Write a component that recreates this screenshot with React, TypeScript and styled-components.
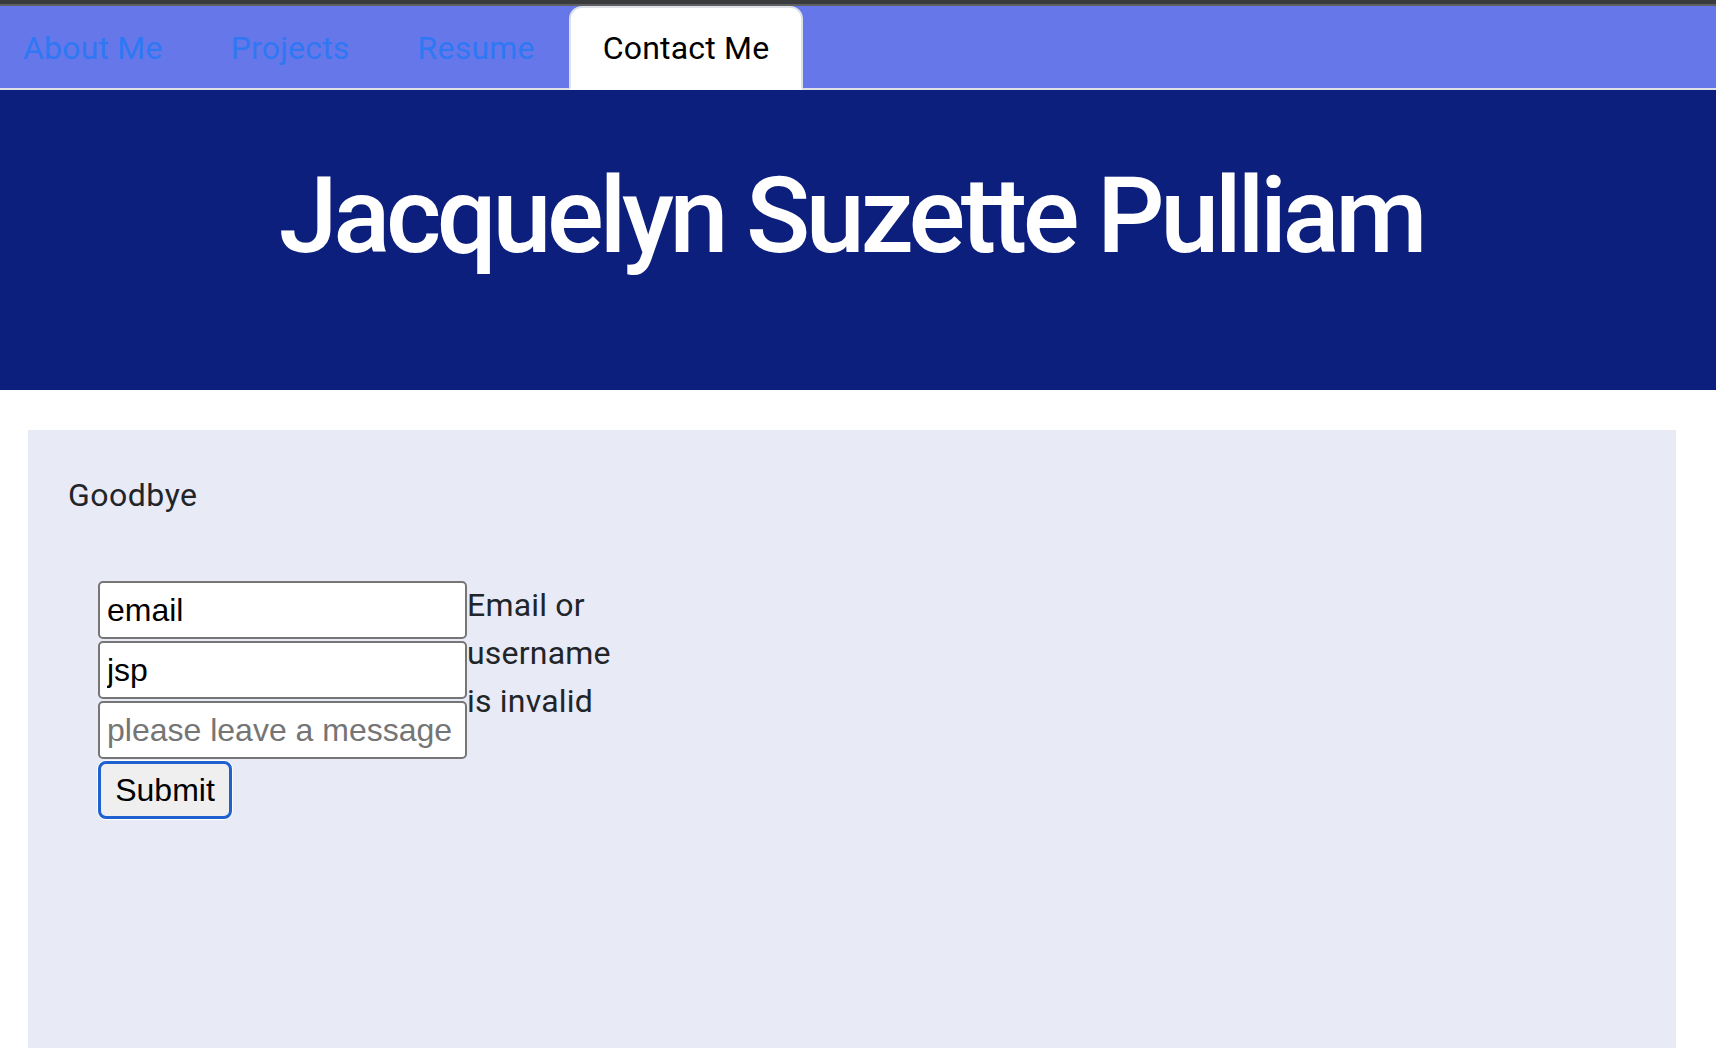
import React from "react";
import styled, { createGlobalStyle } from "styled-components";

const GlobalStyle = createGlobalStyle`
  html, body {
    margin: 0;
    padding: 0;
    overflow: hidden;
    background: #ffffff;
  }
  body {
    font-family: Roboto, "Liberation Sans", Arial, sans-serif;
    color: #212529;
  }
  * { box-sizing: border-box; }
`;

const Page = styled.div`
  width: 1716px;
  height: 1048px;
  overflow: hidden;
  background: #ffffff;
`;

const TopStrip = styled.div`
  height: 6px;
  background: #3a3b3d;
  border-bottom: 2px solid #5f5f61;
`;

const Nav = styled.nav`
  height: 84px;
  background: #6677e9;
  border-bottom: 2px solid #dee2e6;
  display: flex;
  align-items: flex-start;
`;

const TabList = styled.ul`
  list-style: none;
  margin: 0 0 0 -11px;
  padding: 0;
  display: flex;
`;

const Tab = styled.li<{ $active?: boolean }>`
  height: 84px;
  margin-bottom: -2px;
  padding: 16px 32px;
  border: 2px solid ${(p) => (p.$active ? "#dee2e6" : "transparent")};
  border-bottom-color: ${(p) => (p.$active ? "#ffffff" : "transparent")};
  border-radius: 13px 13px 0 0;
  background: ${(p) => (p.$active ? "#ffffff" : "transparent")};
  color: ${(p) => (p.$active ? "#000000" : "#2e78f4")};
  font-size: 32px;
  line-height: 48px;
  letter-spacing: 0.2px;
  white-space: nowrap;
`;

const Header = styled.header`
  height: 300px;
  background: #0c1f7c;
  padding: 63px 14px 0 0;
  text-align: center;
`;

const Title = styled.h1`
  margin: 0;
  color: #ffffff;
  font-size: 106px;
  line-height: 1.2;
  font-weight: 500;
  letter-spacing: -4.4px;
`;

const Main = styled.main`
  padding: 40px 0 0 28px;
`;

const Card = styled.section`
  width: 1648px;
  min-height: 700px;
  background: #e8eaf6;
  padding: 41px 40px;
`;

const Greeting = styled.p`
  margin: 0 0 62px 0;
  font-size: 32px;
  line-height: 48px;
  letter-spacing: 0.5px;
  color: #212529;
`;

const FormRow = styled.form`
  margin-left: 30px;
  display: flex;
  align-items: flex-start;
`;

const Fields = styled.div`
  display: flex;
  flex-direction: column;
  gap: 2px;
  align-items: flex-start;
`;

const TextInput = styled.input`
  width: 369px;
  height: 58px;
  border: 2px solid #767676;
  border-radius: 5px;
  padding: 0 7px;
  background: #ffffff;
  font-family: "Liberation Sans", Arial, sans-serif;
  font-size: 32px;
  color: #000000;
  outline: none;
  &::placeholder {
    color: #757575;
  }
`;

const SubmitButton = styled.button`
  width: 134px;
  height: 58px;
  border: 3px solid #1f62cf;
  border-radius: 8px;
  box-shadow: 0 0 0 1px #ffffff;
  background: #efefef;
  font-family: "Liberation Sans", Arial, sans-serif;
  font-size: 32px;
  color: #000000;
  padding: 0;
`;

const ErrorText = styled.div`
  width: 150px;
  margin-top: 0;
  font-size: 32px;
  line-height: 48px;
  letter-spacing: 0.2px;
  color: #212529;
`;

const tabs = ["About Me", "Projects", "Resume", "Contact Me"];

export default function App() {
  return (
    <Page>
      <GlobalStyle />
      <TopStrip />
      <Nav>
        <TabList>
          {tabs.map((t) => (
            <Tab key={t} $active={t === "Contact Me"}>
              {t}
            </Tab>
          ))}
        </TabList>
      </Nav>
      <Header>
        <Title>Jacquelyn Suzette Pulliam</Title>
      </Header>
      <Main>
        <Card>
          <Greeting>Goodbye</Greeting>
          <FormRow onSubmit={(e) => e.preventDefault()}>
            <Fields>
              <TextInput defaultValue="email" />
              <TextInput defaultValue="jsp" />
              <TextInput placeholder="please leave a message" />
              <SubmitButton type="submit">Submit</SubmitButton>
            </Fields>
            <ErrorText>Email or username is invalid</ErrorText>
          </FormRow>
        </Card>
      </Main>
    </Page>
  );
}
